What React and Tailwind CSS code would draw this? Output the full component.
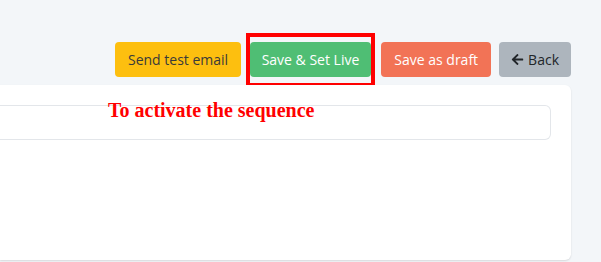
import { FaArrowLeft } from "react-icons/fa";

export default function App() {
  return (
    <div className="min-h-[262px] w-[601px] overflow-hidden bg-[#f3f6f9] pt-[42px] pr-[30px] font-['Open_Sans',sans-serif]">
      {/* toolbar */}
      <div className="flex justify-end">
        <button className="h-[35px] rounded bg-[#fdbf0f] px-[12.5px] text-sm text-[#3a3a3a]">
          Send test email
        </button>
        <div className="relative ml-[9px]">
          <button className="h-[35px] rounded bg-[#4fbe74] px-[12px] text-sm text-white">
            Save &amp; Set Live
          </button>
          <span className="pointer-events-none absolute -top-[9px] -bottom-[10px] -left-[4px] -right-[4px] border-4 border-[#ff0000]"></span>
        </div>
        <button className="ml-[10px] h-[35px] rounded bg-[#f27356] px-[13px] text-sm text-white">
          Save as draft
        </button>
        <button className="ml-[8px] flex h-[35px] items-center gap-[4px] rounded bg-[#adb5bd] px-[12px] text-sm text-[#212529]">
          <FaArrowLeft className="h-[13px] w-[13px]" />
          Back
        </button>
      </div>

      {/* card */}
      <div className="relative mt-[8px] h-[175px] rounded-r-md bg-white pt-[20px] pr-[20px] shadow-[0_1px_2px_rgba(0,0,0,0.12)]">
        <div className="h-[35px] rounded-r-md border border-l-0 border-[#e3e6ea]"></div>
        <div className="absolute top-[10px] left-[108px] font-['Liberation_Serif',serif] text-[20px] font-bold text-[#ff0000]">
          To activate the sequence
        </div>
      </div>
    </div>
  );
}
